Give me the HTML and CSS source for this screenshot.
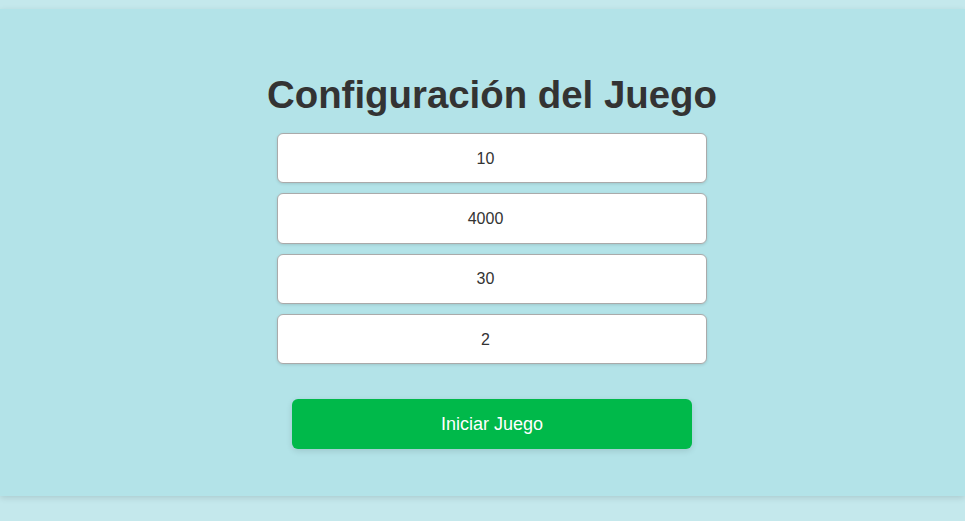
FILE: index.html
```html
<!DOCTYPE html>
<html lang="es">
<head>
<meta charset="utf-8">
<title>Configuración del Juego</title>
<link rel="stylesheet" href="styles.css">
</head>
<body>
<div class="page">
  <main class="config">
    <h1 class="title">Configuración del Juego</h1>
    <div class="fields">
      <input class="field" type="number" value="10">
      <input class="field" type="number" value="4000">
      <input class="field" type="number" value="30">
      <input class="field" type="number" value="2">
    </div>
    <button class="start" type="button">Iniciar Juego</button>
  </main>
</div>
</body>
</html>
```
FILE: styles.css
```css
html, body {
  margin: 0;
  padding: 0;
  background: #c4e8ec;
  font-family: "Liberation Sans", Arial, sans-serif;
}
.page {
  padding: 9px 0 25px;
}
.config {
  height: 487px;
  box-sizing: border-box;
  background: #b3e3e8;
  box-shadow: 0 2px 6px rgba(0, 0, 0, 0.12);
  display: flex;
  flex-direction: column;
  align-items: center;
  padding: 63px 0 0 19px;
}
.title {
  margin: 0;
  font-size: 38.4px;
  line-height: 46px;
  font-weight: bold;
  color: #333333;
}
.fields {
  margin-top: 15px;
  display: flex;
  flex-direction: column;
  gap: 9.93px;
}
.field {
  width: 430px;
  height: 50.4px;
  box-sizing: border-box;
  border: 1px solid #aaaaaa;
  border-radius: 6px;
  background: #ffffff;
  box-shadow: 0 1px 3px rgba(0, 0, 0, 0.12);
  text-align: center;
  font-family: "Liberation Sans", Arial, sans-serif;
  font-size: 16px;
  color: #333333;
  margin: 0;
  padding: 1px 9px 0 11px;
}
.start {
  margin-top: 34.5px;
  width: 400px;
  height: 50px;
  border: none;
  border-radius: 6px;
  background: #00b94a;
  color: #ffffff;
  font-family: "Liberation Sans", Arial, sans-serif;
  font-size: 18px;
  padding: 2px 0 0;
  box-shadow: 0 2px 6px rgba(0, 0, 0, 0.12);
  cursor: pointer;
}
```
